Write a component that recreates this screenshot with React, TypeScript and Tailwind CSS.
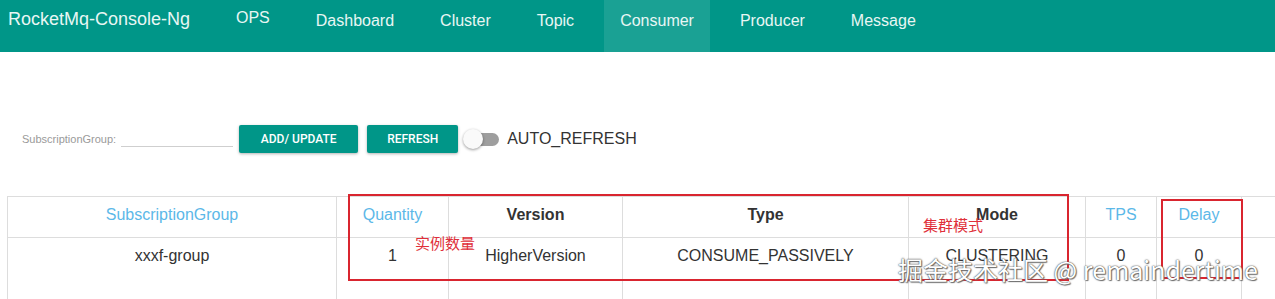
import React from "react";

const navItems = ["Dashboard", "Cluster", "Topic", "Consumer", "Producer", "Message"];

const columns = [
  { label: "SubscriptionGroup", width: "w-[329px]", link: true },
  { label: "Quantity", width: "w-[112px]", link: true },
  { label: "Version", width: "w-[174px]", link: false },
  { label: "Type", width: "w-[286px]", link: false },
  { label: "Mode", width: "w-[177px]", link: false },
  { label: "TPS", width: "w-[71px]", link: true },
  { label: "Delay", width: "w-[85px]", link: true },
  { label: "", width: "w-[200px]", link: false },
];

const row = ["xxxf-group", "1", "HigherVersion", "CONSUME_PASSIVELY", "CLUSTERING", "0", "0", ""];

export default function App() {
  return (
    <div className="relative h-[299px] w-full overflow-hidden bg-white font-['Liberation_Sans',Arial,sans-serif] text-[#333]">
      {/* Top navigation */}
      <nav className="flex h-[52px] items-stretch bg-[#009688] text-[#e8f6f4]">
        <div className="w-[220px] pl-2 pt-[8px] text-[18px] leading-[22px]">RocketMq-Console-Ng</div>
        <div className="flex gap-[14px]">
          <div className="px-4 pt-[7px] text-[16px] leading-[22px]">OPS</div>
          {navItems.map((item) => (
            <div
              key={item}
              className={`px-4 pt-[10px] text-[16px] leading-[22px] ${item === "Consumer" ? "bg-[#1aa194]" : ""}`}
            >
              {item}
            </div>
          ))}
        </div>
      </nav>

      {/* Toolbar */}
      <div className="mt-[73px] flex h-[28px] items-center pl-[22px]">
        <span className="text-[11px] text-[#9a9a9a]">SubscriptionGroup:</span>
        <div className="ml-[5px] mt-[14px] h-px w-[112px] bg-[#cfcfcf]" />
        <button className="ml-[6px] h-[28px] w-[119px] rounded-[2px] bg-[#009688] font-['Roboto',sans-serif] text-[12px] font-medium text-white shadow-[0_1px_3px_rgba(0,0,0,0.3)]">
          ADD/ UPDATE
        </button>
        <button className="ml-[9px] h-[28px] w-[91px] rounded-[2px] bg-[#009688] font-['Roboto',sans-serif] text-[12px] font-medium text-white shadow-[0_1px_3px_rgba(0,0,0,0.3)]">
          REFRESH
        </button>
        <div className="relative ml-[5px] h-[20px] w-[36px]">
          <div className="absolute left-[6px] top-[4px] h-[13px] w-[30px] rounded-full bg-[#9e9e9e]" />
          <div className="absolute left-0 top-0 h-[20px] w-[20px] rounded-full bg-[#fafafa] shadow-[0_1px_3px_rgba(0,0,0,0.4)]" />
        </div>
        <span className="ml-[8px] text-[16px] text-[#333]">AUTO_REFRESH</span>
      </div>

      {/* Table */}
      <div className="mt-[43px] pl-[7px]">
        <table className="w-[1434px] table-fixed border-collapse">
          <thead>
            <tr>
              {columns.map((c, i) => (
                <th
                  key={i}
                  className={`${c.width} border border-[#dddddd] pb-3 pt-2 text-center text-[16px] leading-[20px] ${
                    c.link ? "font-normal text-[#5cb8e8]" : "font-bold text-[#333]"
                  }`}
                >
                  {c.label}
                </th>
              ))}
            </tr>
          </thead>
          <tbody>
            <tr>
              {row.map((v, i) => (
                <td
                  key={i}
                  className="h-[80px] border border-[#dddddd] pt-2 text-center align-top text-[16px] leading-[20px] text-[#333]"
                >
                  {v}
                </td>
              ))}
            </tr>
          </tbody>
        </table>
      </div>

      {/* Annotations */}
      <div className="absolute left-[348px] top-[194px] h-[87px] w-[721px] border-2 border-[#d9252f]" />
      <div className="absolute left-[1161px] top-[199px] h-[80px] w-[82px] border-2 border-[#d9252f]" />
      <span className="absolute left-[415px] top-[234px] font-['Noto_Sans_CJK_SC',sans-serif] text-[15px] leading-[18px] text-[#e0303a]">
        实例数量
      </span>
      <span className="absolute left-[923px] top-[216px] font-['Noto_Sans_CJK_SC',sans-serif] text-[15px] leading-[18px] text-[#e0303a]">
        集群模式
      </span>

      {/* Watermark */}
      <span className="absolute left-[898px] top-[253px] font-['Noto_Sans_CJK_SC',sans-serif] text-[25px] leading-[32px] text-white [text-shadow:0_0_1px_#444,0_0_2px_#666,1px_1px_1px_#777]">
        掘金技术社区 @ remaindertime
      </span>
    </div>
  );
}
